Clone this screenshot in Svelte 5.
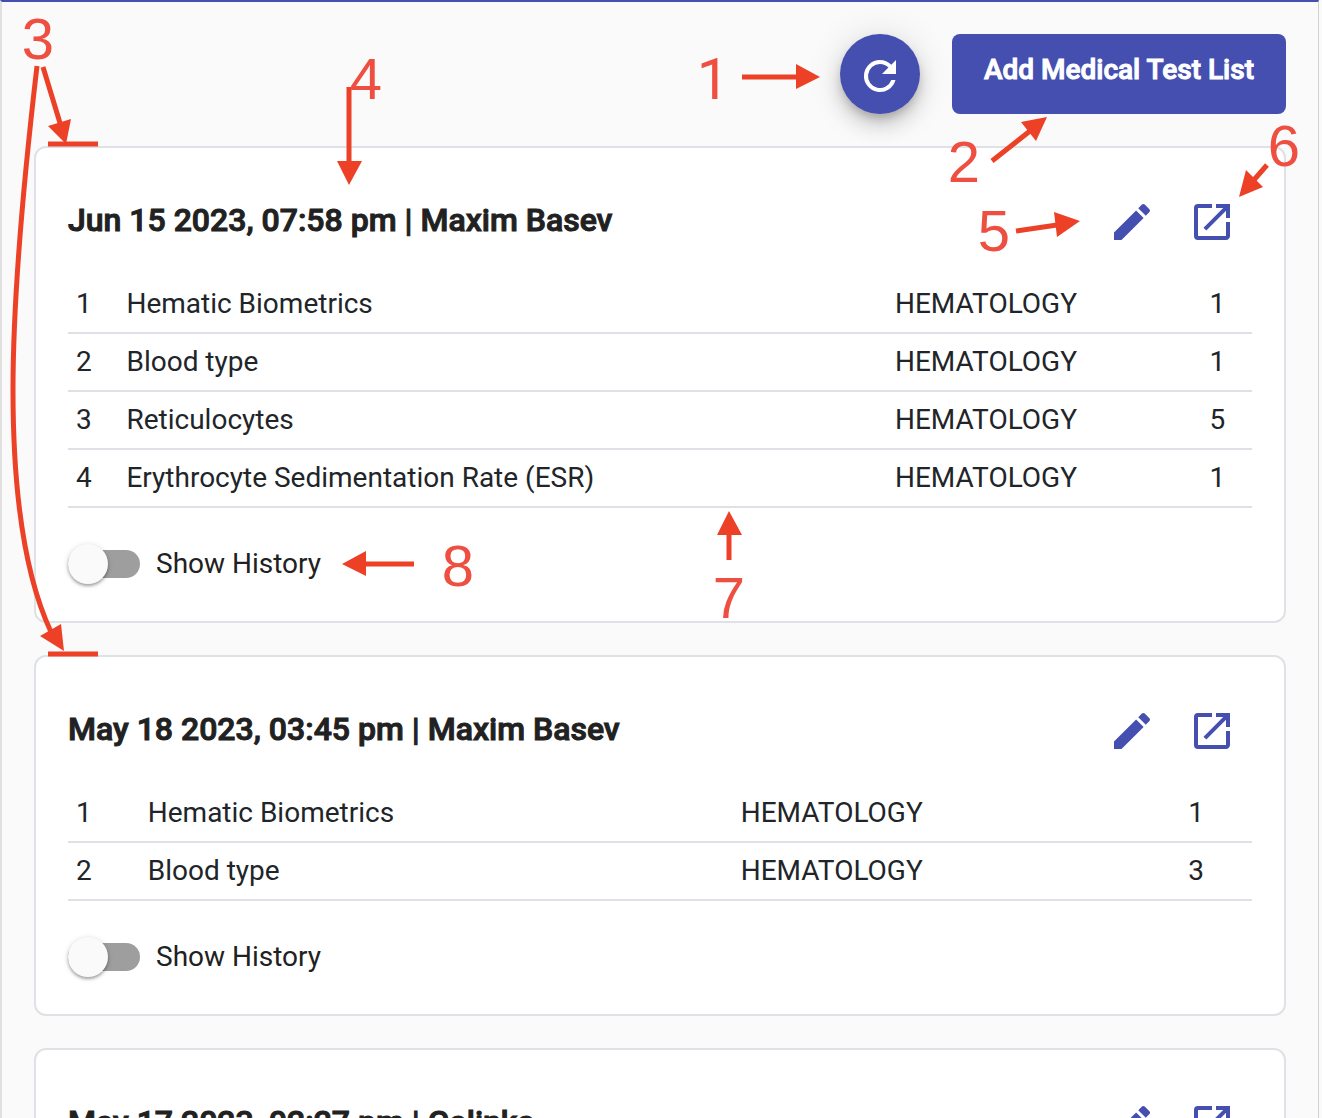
<script>
  const lists = [
    {
      title: 'Jun 15 2023, 07:58 pm | Maxim Basev',
      tests: [
        ['Hematic Biometrics', 'HEMATOLOGY', 1],
        ['Blood type', 'HEMATOLOGY', 1],
        ['Reticulocytes', 'HEMATOLOGY', 5],
        ['Erythrocyte Sedimentation Rate (ESR)', 'HEMATOLOGY', 1]
      ]
    },
    {
      title: 'May 18 2023, 03:45 pm | Maxim Basev',
      tests: [
        ['Hematic Biometrics', 'HEMATOLOGY', 1],
        ['Blood type', 'HEMATOLOGY', 3]
      ]
    },
    { title: 'May 17 2023, 02:27 pm | Galinka', tests: [] }
  ];
</script>

<div class="page">
  <header class="toolbar">
    <button class="fab" aria-label="Refresh">
      <svg viewBox="0 0 24 24" aria-hidden="true"><path d="M17.65 6.35A7.96 7.96 0 0 0 12 4a8 8 0 1 0 7.73 10h-2.08A6 6 0 1 1 12 6c1.66 0 3.14.69 4.22 1.78L13 11h7V4l-2.35 2.35z" /></svg>
    </button>
    <button class="add">Add Medical Test List</button>
  </header>

  <main class="lists">
    {#each lists as list, i}
      <section class="card">
        <div class="head">
          <h2>{list.title}</h2>
          <button class="icon" aria-label="Edit">
            <svg viewBox="0 0 24 24" aria-hidden="true"><path d="M3 17.25V21h3.75L17.81 9.94l-3.75-3.75L3 17.25zM20.71 7.04a1 1 0 0 0 0-1.41l-2.34-2.34a1 1 0 0 0-1.41 0l-1.83 1.83 3.75 3.75 1.83-1.83z" /></svg>
          </button>
          <button class="icon" aria-label="Open">
            <svg viewBox="0 0 24 24" aria-hidden="true"><path d="M19 19H5V5h7V3H5a2 2 0 0 0-2 2v14a2 2 0 0 0 2 2h14c1.1 0 2-.9 2-2v-7h-2v7zM14 3v2h3.59l-9.83 9.83 1.41 1.41L19 6.41V10h2V3h-7z" /></svg>
          </button>
        </div>
        {#if list.tests.length}
          <table>
            <tbody>
              {#each list.tests as [name, category, count], n}
                <tr><td>{n + 1}</td><td>{name}</td><td>{category}</td><td>{count}</td></tr>
              {/each}
            </tbody>
          </table>
          <label class="history" for="history-{i}">
            <input type="checkbox" role="switch" id="history-{i}" />
            <span>Show History</span>
          </label>
        {/if}
      </section>
    {/each}
  </main>

  <svg class="notes left" width="760" height="700" viewBox="0 0 760 700">
    <path class="line" d="M43 67L60 123M37 66C26 160 13 290 13 390C13 480 22 570 51 632M349 87V163M729 560V534M414 564H365M48 144H98M48 654H98" />
    <path class="tip" d="M48 126L71 119L66 144ZM40 636L61 624L64 651ZM337 161H362L349 185ZM717 535H742L729 511ZM366 551V576L342 564Z" />
    <text x="38" y="59">3</text>
    <text x="366" y="99">4</text>
    <text x="729" y="618">7</text>
    <text x="458" y="586">8</text>
  </svg>
  <svg class="notes right" width="642" height="280" viewBox="680 0 642 280">
    <path class="line" d="M742 77H797M992 161L1030 131M1267 165L1253 181M1016 231L1057 225" />
    <path class="tip" d="M796 64V89L820 77ZM1021 122L1036 141L1047 117ZM1246 170L1263 187L1239 197ZM1054 212L1057 237L1080 221Z" />
    <text class="one" x="713" y="99">1</text>
    <text x="964" y="182">2</text>
    <text x="994" y="251">5</text>
    <text x="1284" y="166">6</text>
  </svg>
</div>

<style>
  :global(body) {
    margin: 0;
    background: #fafafa;
  }
  .page {
    position: relative;
    box-sizing: border-box;
    height: 100vh;
    overflow: hidden;
    margin-right: 3px;
    padding: 32px;
    border-top: 2px solid #444fb0;
    border-left: 2px solid #e0e0e0;
    border-right: 1px solid #d0d0d0;
    background: #fafafa;
    color: #212121;
    font: 28px/40px Roboto, sans-serif;
  }
  button {
    border: 0;
    padding: 0;
    font: inherit;
    cursor: pointer;
  }
  svg {
    fill: currentColor;
  }
  .toolbar {
    display: flex;
    justify-content: flex-end;
    gap: 32px;
    margin-bottom: 32px;
  }
  .fab {
    display: grid;
    place-items: center;
    box-sizing: border-box;
    width: 80px;
    height: 80px;
    padding-top: 4px;
    border-radius: 50%;
    background: #444fb0;
    color: #fff;
    box-shadow: 0 6px 10px -2px rgba(0, 0, 0, 0.2), 0 12px 20px rgba(0, 0, 0, 0.14), 0 2px 36px rgba(0, 0, 0, 0.12);
  }
  .fab svg,
  .icon svg {
    width: 48px;
    height: 48px;
  }
  .add {
    height: 80px;
    padding: 0 32px 8px;
    border-radius: 8px;
    background: #444fb0;
    color: #fff;
    font-weight: 500;
    -webkit-text-stroke: 1px currentColor;
  }
  .lists {
    display: grid;
    gap: 32px;
  }
  .card {
    padding: 32px;
    border: 2px solid #dee2e6;
    border-radius: 12px;
    background: #fff;
  }
  .head {
    display: flex;
    align-items: center;
    margin-bottom: 12px;
  }
  h2 {
    flex: 1;
    margin: 0;
    padding-bottom: 4px;
    font-size: 32px;
    font-weight: 500;
    -webkit-text-stroke: 1px currentColor;
  }
  .icon {
    display: grid;
    place-items: center;
    box-sizing: border-box;
    width: 80px;
    height: 84px;
    background: none;
    color: #444fb0;
  }
  table {
    width: 100%;
    border-collapse: separate;
    border-spacing: 0;
    color: #212529;
  }
  td {
    padding: 8px;
    border-bottom: 2px solid #dee2e6;
  }
  .history {
    display: flex;
    align-items: center;
    gap: 16px;
    width: max-content;
    margin: 32px 0 2px;
    height: 47px;
  }
  input {
    appearance: none;
    display: flex;
    align-items: center;
    width: 72px;
    height: 28px;
    margin: 0;
    border-radius: 14px;
    background: #9e9e9e;
  }
  input::before {
    content: '';
    width: 40px;
    height: 40px;
    border-radius: 50%;
    background: #fafafa;
    box-shadow: 0 2px 3px rgba(0, 0, 0, 0.3), 0 1px 6px rgba(0, 0, 0, 0.12);
  }
  input:checked {
    justify-content: flex-end;
  }
  .notes {
    position: absolute;
    top: -2px;
    pointer-events: none;
  }
  .left {
    left: -2px;
  }
  .right {
    right: -4px;
  }
  .line {
    fill: none;
    stroke: #ec4126;
    stroke-width: 5;
  }
  .tip {
    fill: #ec4126;
  }
  text {
    fill: #ee4f40;
    font: 58px 'Liberation Sans', Arial, sans-serif;
    text-anchor: middle;
  }
  .one {
    font-family: Roboto, sans-serif;
  }
</style>
